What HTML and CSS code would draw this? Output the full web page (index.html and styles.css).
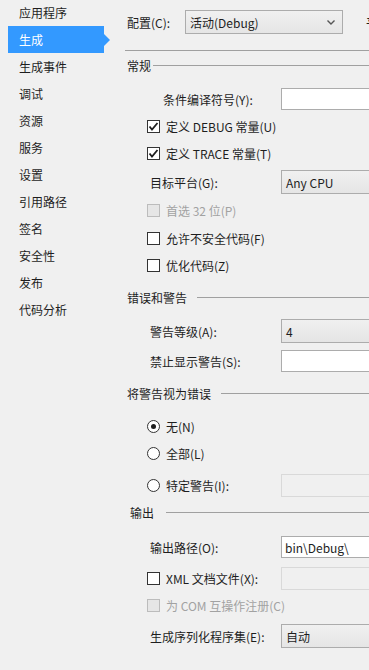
FILE: index.html
```html
<!DOCTYPE html>
<html lang="zh-CN">
<head>
  <meta charset="UTF-8" />
  <title>生成</title>
  <link rel="stylesheet" href="styles.css">
</head>
<body>
  <div class="window">
    <ul class="tabs">
      <li>应用程序</li>
      <li class="active">生成</li>
      <li>生成事件</li>
      <li>调试</li>
      <li>资源</li>
      <li>服务</li>
      <li>设置</li>
      <li>引用路径</li>
      <li>签名</li>
      <li>安全性</li>
      <li>发布</li>
      <li>代码分析</li>
    </ul>

    <div class="page">
      <div class="config-bar">
        <span class="config-label">配置(C):</span>
        <div class="config-select">
          <span>活动(Debug)</span>
          <svg width="8" height="5" viewBox="0 0 8 5"><polyline points="0.5,0.5 4,4 7.5,0.5" fill="none" stroke="#555" stroke-width="1.4"/></svg>
        </div>
        <span class="config-label platform">平台(M):</span>
      </div>
      <div class="rule"></div>

      <!-- 常规 -->
      <div class="section-head m6 short"><span>常规</span></div>
      <div class="row field m14">
        <span class="label deep">条件编译符号(Y):</span>
        <div class="box"></div>
      </div>
      <div class="row check m7">
        <span class="checkbox"><svg width="11" height="11" viewBox="0 0 11 11"><polyline points="1.5,5.5 4,8.5 9.5,2" fill="none" stroke="#1e1e1e" stroke-width="1.8"/></svg></span>
        <span>定义 DEBUG 常量(U)</span>
      </div>
      <div class="row check">
        <span class="checkbox"><svg width="11" height="11" viewBox="0 0 11 11"><polyline points="1.5,5.5 4,8.5 9.5,2" fill="none" stroke="#1e1e1e" stroke-width="1.8"/></svg></span>
        <span>定义 TRACE 常量(T)</span>
      </div>
      <div class="row field m9">
        <span class="label">目标平台(G):</span>
        <div class="box select">Any CPU</div>
      </div>
      <div class="row check disabled m8">
        <span class="checkbox"></span>
        <span>首选 32 位(P)</span>
      </div>
      <div class="row check m12">
        <span class="checkbox"></span>
        <span>允许不安全代码(F)</span>
      </div>
      <div class="row check">
        <span class="checkbox"></span>
        <span>优化代码(Z)</span>
      </div>

      <!-- 错误和警告 -->
      <div class="section-head m16"><span>错误和警告</span></div>
      <div class="row field m14">
        <span class="label">警告等级(A):</span>
        <div class="box select">4</div>
      </div>
      <div class="row field m6">
        <span class="label">禁止显示警告(S):</span>
        <div class="box"></div>
      </div>

      <!-- 将警告视为错误 -->
      <div class="section-head m12"><span>将警告视为错误</span></div>
      <div class="row check m17">
        <span class="radio checked"></span>
        <span>无(N)</span>
      </div>
      <div class="row check">
        <span class="radio"></span>
        <span>全部(L)</span>
      </div>
      <div class="row check field m12">
        <span class="radio"></span>
        <span class="check-label">特定警告(I):</span>
        <div class="box off"></div>
      </div>

      <!-- 输出 -->
      <div class="section-head m7 indent"><span>输出</span></div>
      <div class="row field m15">
        <span class="label">输出路径(O):</span>
        <div class="box">bin\Debug\</div>
      </div>
      <div class="row check field m7">
        <span class="checkbox"></span>
        <span class="check-label">XML 文档文件(X):</span>
        <div class="box off"></div>
      </div>
      <div class="row check disabled m7">
        <span class="checkbox"></span>
        <span>为 COM 互操作注册(C)</span>
      </div>
      <div class="row field">
        <span class="label">生成序列化程序集(E):</span>
        <div class="box select">自动</div>
      </div>
    </div>
  </div>
</body>
</html>
```

FILE: styles.css
```css
* {
  box-sizing: border-box;
}

body {
  margin: 0;
  background: #f0f0f0;
  color: #1e1e1e;
  font-family: "Noto Sans CJK SC", "Noto Sans", sans-serif;
  font-size: 12px;
  overflow: hidden;
}

.window {
  display: flex;
  width: 369px;
  height: 670px;
  overflow: hidden;
}

/* Onglets de gauche */
.tabs {
  list-style: none;
  margin: -1px 0 0;
  padding: 0;
  width: 118px;
  flex: none;
}

.tabs li {
  height: 27px;
  line-height: 27px;
  padding-left: 19px;
}

.tabs li.active {
  position: relative;
  width: 96px;
  margin-left: 8px;
  padding-left: 11px;
  background: #3399ff;
  color: #fff;
}

.tabs li.active::after {
  content: "";
  position: absolute;
  left: 100%;
  top: 50%;
  margin-top: -6px;
  border-left: 6px solid #3399ff;
  border-top: 6px solid transparent;
  border-bottom: 6px solid transparent;
}

/* Page de propriétés */
.page {
  flex: none;
  width: 320px;
  padding-left: 7px;
}

.config-bar {
  display: flex;
  align-items: center;
  height: 34px;
  padding: 10px 0 0 2px;
}

.config-label {
  width: 58px;
  flex: none;
}

.config-label.platform {
  margin-left: 23px;
}

.config-select {
  display: flex;
  align-items: center;
  justify-content: space-between;
  width: 158px;
  height: 24px;
  padding: 0 7px 0 4px;
  border: 1px solid #acacac;
  background: linear-gradient(#f0f0f0, #e5e5e5);
  flex: none;
}

.rule {
  height: 1px;
  margin-top: 16px;
  background: #a0a0a0;
}

.section-head {
  display: flex;
  align-items: center;
  gap: 10px;
  height: 16px;
  padding-left: 2px;
}

.section-head::after {
  content: "";
  flex: 1;
  height: 1px;
  background: #a0a0a0;
}

.section-head.short {
  gap: 2px;
}

.section-head.indent {
  padding-left: 5px;
  gap: 12px;
}

.row {
  display: flex;
  align-items: center;
  height: 16px;
  margin-top: 11px;
}

.row.field {
  height: 24px;
}

.label {
  width: 156px;
  padding-left: 25px;
  flex: none;
}

.label.deep {
  padding-left: 38px;
}

.check {
  padding-left: 22px;
  gap: 6px;
}

.check-label {
  width: 109px;
  flex: none;
}

.checkbox,
.radio {
  display: flex;
  align-items: center;
  justify-content: center;
  width: 13px;
  height: 13px;
  border: 1px solid #333;
  background: #fff;
  flex: none;
}

.radio {
  border-radius: 50%;
}

.radio.checked::before {
  content: "";
  width: 5px;
  height: 5px;
  border-radius: 50%;
  background: #1e1e1e;
}

.check.disabled {
  color: #a2a2a2;
}

.check.disabled .checkbox {
  border-color: #bcbcbc;
  background: #e6e6e6;
}

.box {
  display: flex;
  align-items: center;
  width: 120px;
  height: 22px;
  padding-left: 3px;
  border: 1px solid #acacac;
  background: #fff;
  flex: none;
}

.box.select {
  height: 24px;
  padding-left: 4px;
  background: linear-gradient(#f0f0f0, #e5e5e5);
}

.box.off {
  height: 23px;
  border-color: #d9d9d9;
  background: #f0f0f0;
}

/* Espacements */
.m6 { margin-top: 6px; }
.m7 { margin-top: 7px; }
.m8 { margin-top: 8px; }
.m9 { margin-top: 9px; }
.m12 { margin-top: 12px; }
.m14 { margin-top: 14px; }
.m15 { margin-top: 15px; }
.m16 { margin-top: 16px; }
.m17 { margin-top: 17px; }
```
